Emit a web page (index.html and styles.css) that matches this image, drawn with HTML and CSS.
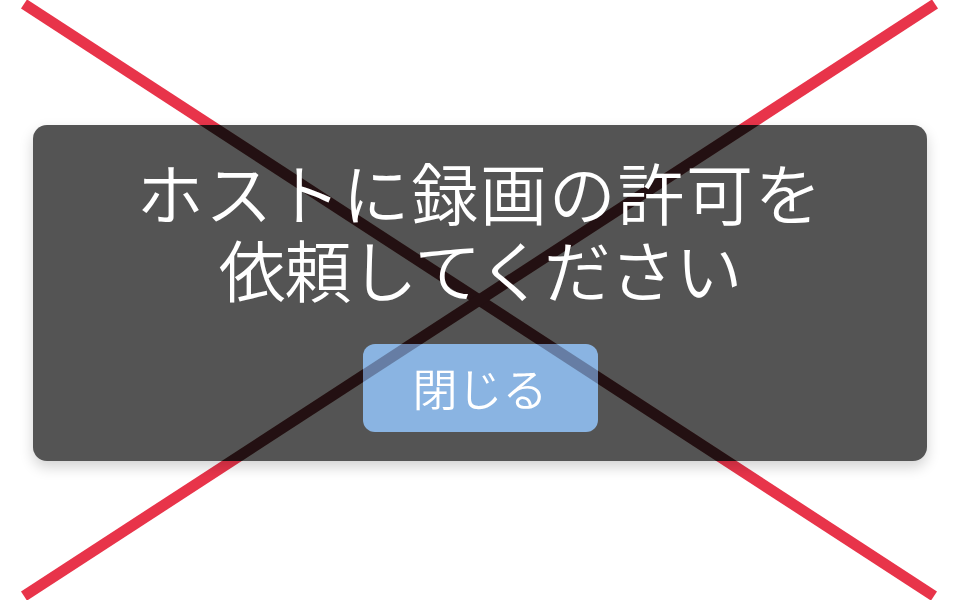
FILE: index.html
```html
<!DOCTYPE html>
<html lang="ja">
<head>
<meta charset="utf-8">
<title>録画の許可</title>
<link rel="stylesheet" href="styles.css">
</head>
<body>
<div class="stage">
  <div class="dialog">
    <svg class="shade shade-panel" width="960" height="600" viewBox="0 0 960 600" aria-hidden="true">
      <line x1="24" y1="4" x2="934" y2="596"/>
      <line x1="935" y1="4" x2="24" y2="596"/>
    </svg>
    <p class="message"><span class="line-one">ホストに録画の許可を</span><span class="line-two">依頼してください</span></p>
    <button class="close-btn" type="button"><svg class="shade shade-btn" width="960" height="600" viewBox="0 0 960 600" aria-hidden="true">
        <line x1="24" y1="4" x2="934" y2="596"/>
        <line x1="935" y1="4" x2="24" y2="596"/>
      </svg><span class="btn-label">閉じる</span></button>
  </div>
</div>
<svg class="cross" width="960" height="600" viewBox="0 0 960 600" aria-hidden="true">
  <line x1="24" y1="4" x2="934" y2="596"/>
  <line x1="935" y1="4" x2="24" y2="596"/>
</svg>
</body>
</html>
```

FILE: styles.css
```css
html, body {
  margin: 0;
  padding: 0;
  background: #ffffff;
}

body {
  width: 960px;
  height: 600px;
  overflow: hidden;
  position: relative;
  font-family: "Noto Sans CJK JP", "Noto Sans", sans-serif;
}

.stage {
  padding: 125px 33px 0;
}

.dialog {
  position: relative;
  overflow: hidden;
  box-sizing: border-box;
  height: 336px;
  background: #545454;
  border-radius: 14px;
  box-shadow: 0 6px 14px rgba(0, 0, 0, 0.18);
  display: flex;
  flex-direction: column;
  align-items: center;
  padding-top: 27px;
}

.shade {
  position: absolute;
  pointer-events: none;
}

.shade-panel {
  left: -33px;
  top: -125px;
  z-index: 0;
}

.shade-panel line {
  stroke: #264a3c;
  stroke-width: 11;
}

.shade-btn {
  left: -363px;
  top: -344px;
}

.shade-btn line {
  stroke: rgba(20, 0, 20, 0.3);
  stroke-width: 11;
}

.message {
  position: relative;
  z-index: 1;
  margin: 0;
  color: #ffffff;
  font-size: 67px;
  line-height: 77px;
  font-weight: 350;
  white-space: nowrap;
  display: flex;
  flex-direction: column;
  align-items: center;
}

.line-one {
  letter-spacing: 1.7px;
}

.line-two {
  letter-spacing: -1.2px;
}

.close-btn {
  position: relative;
  z-index: 1;
  overflow: hidden;
  margin-top: 38px;
  width: 235px;
  height: 88px;
  flex: none;
  border: none;
  border-radius: 12px;
  background: #8ab4e2;
  color: #ffffff;
  font-family: "Noto Sans CJK JP", "Noto Sans", sans-serif;
  font-size: 45px;
  font-weight: 350;
  padding: 0;
  line-height: 88px;
}

.btn-label {
  position: relative;
}

.cross {
  position: absolute;
  left: 0;
  top: 0;
  pointer-events: none;
  mix-blend-mode: multiply;
}

.cross line {
  stroke: #e8344a;
  stroke-width: 11;
  stroke-linecap: butt;
}
```
